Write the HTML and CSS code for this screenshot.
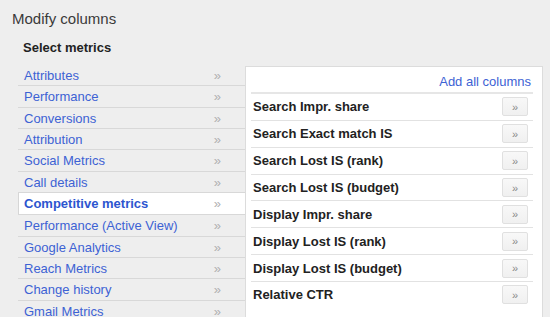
FILE: index.html
```html
<!DOCTYPE html>
<html lang="en">
<head>
  <meta charset="UTF-8" />
  <title>Modify columns</title>
  <link rel="stylesheet" href="styles.css">
</head>
<body>
  <h1 class="title">Modify columns</h1>
  <h2 class="subtitle">Select metrics</h2>

  <div class="picker">
    <ul class="groups">
      <li class="group"><a href="#">Attributes</a><span class="arrow">&raquo;</span></li>
      <li class="group"><a href="#">Performance</a><span class="arrow">&raquo;</span></li>
      <li class="group"><a href="#">Conversions</a><span class="arrow">&raquo;</span></li>
      <li class="group"><a href="#">Attribution</a><span class="arrow">&raquo;</span></li>
      <li class="group"><a href="#">Social Metrics</a><span class="arrow">&raquo;</span></li>
      <li class="group"><a href="#">Call details</a><span class="arrow">&raquo;</span></li>
      <li class="group selected"><a href="#">Competitive metrics</a><span class="arrow">&raquo;</span></li>
      <li class="group"><a href="#">Performance (Active View)</a><span class="arrow">&raquo;</span></li>
      <li class="group"><a href="#">Google Analytics</a><span class="arrow">&raquo;</span></li>
      <li class="group"><a href="#">Reach Metrics</a><span class="arrow">&raquo;</span></li>
      <li class="group"><a href="#">Change history</a><span class="arrow">&raquo;</span></li>
      <li class="group"><a href="#">Gmail Metrics</a><span class="arrow">&raquo;</span></li>
    </ul>

    <div class="panel">
      <div class="panel-head"><a href="#">Add all columns</a></div>
      <ul class="metrics">
        <li class="metric"><span>Search Impr. share</span><button class="add">&raquo;</button></li>
        <li class="metric"><span>Search Exact match IS</span><button class="add">&raquo;</button></li>
        <li class="metric"><span>Search Lost IS (rank)</span><button class="add">&raquo;</button></li>
        <li class="metric"><span>Search Lost IS (budget)</span><button class="add">&raquo;</button></li>
        <li class="metric"><span>Display Impr. share</span><button class="add">&raquo;</button></li>
        <li class="metric"><span>Display Lost IS (rank)</span><button class="add">&raquo;</button></li>
        <li class="metric"><span>Display Lost IS (budget)</span><button class="add">&raquo;</button></li>
        <li class="metric"><span>Relative CTR</span><button class="add">&raquo;</button></li>
      </ul>
    </div>
  </div>
</body>
</html>
```

FILE: styles.css
```css
body {
  font-family: "Liberation Sans", Arial, sans-serif;
  background-color: #eeeeee;
  color: #222222;
  margin: 0;
  overflow: hidden;
}

a {
  color: #3d62d4;
  text-decoration: none;
}

ul {
  list-style: none;
  margin: 0;
  padding: 0;
}

.title {
  font-size: 15px;
  font-weight: normal;
  line-height: 17px;
  color: #3a3a3a;
  margin: 0;
  padding: 10px 0 0 12px;
}

.subtitle {
  font-size: 13px;
  font-weight: bold;
  line-height: 15px;
  margin: 13px 0 0 23px;
}

.picker {
  display: flex;
  align-items: flex-start;
  margin: 10px 0 0 18px;
}

/* left column: metric groups */
.groups {
  width: 227px;
  flex-shrink: 0;
}

.group {
  display: flex;
  justify-content: space-between;
  height: 20.33px;
  line-height: 21px;
  font-size: 13px;
  padding: 0 24px 0 6px;
  border-bottom: 1px solid #d8d8d8;
}

.group .arrow {
  color: #b0b0b0;
  font-size: 13px;
}

.group.selected {
  height: 21.33px;
  line-height: 22px;
  background: #ffffff;
  box-shadow: inset 1px 0 0 #d6d6d6;
}

.group.selected a {
  font-weight: bold;
  color: #2c55cf;
}

/* right column: metrics of the selected group */
.panel {
  width: 282px;
  height: 260px;
  margin-top: 1px;
  padding: 0 9px 0 5px;
  background: #ffffff;
  border: 1px solid #dcdcdc;
}

.panel-head {
  height: 21px;
  padding-top: 4px;
  line-height: 22px;
  text-align: right;
  font-size: 13px;
  padding-right: 2px;
  border-bottom: 2px solid #e6e6e6;
}

.metric {
  display: flex;
  align-items: center;
  justify-content: space-between;
  height: 25.86px;
  padding: 0 5px 0 2px;
  font-size: 13px;
  font-weight: bold;
  color: #222222;
  border-bottom: 1px solid #e2e2e2;
}

.metric:last-child {
  border-bottom: 0;
}

.add {
  width: 26px;
  height: 19px;
  padding: 0;
  font-family: "Liberation Sans", Arial, sans-serif;
  font-size: 11px;
  color: #888888;
  background: linear-gradient(#f8f8f8, #f0f0f0);
  border: 1px solid #e0e0e0;
  border-radius: 2px;
}
```
